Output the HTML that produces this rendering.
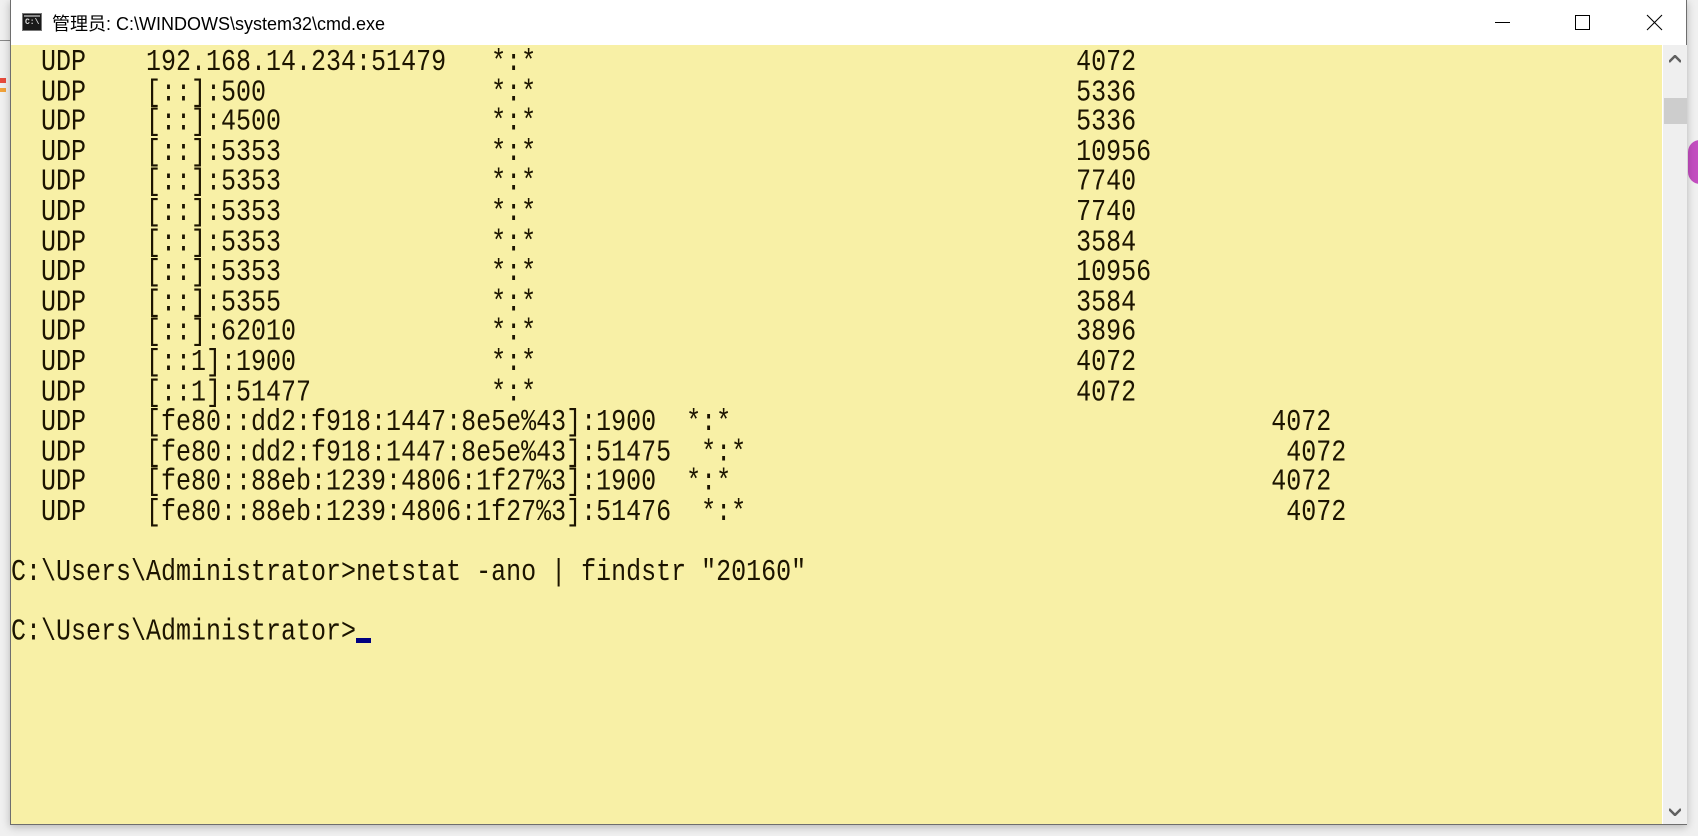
<!DOCTYPE html>
<html><head><meta charset="utf-8"><style>
html,body{margin:0;padding:0;}
body{width:1698px;height:836px;position:relative;overflow:hidden;background:#f0f0f0;}
#win{position:absolute;left:10px;top:0;width:1677px;height:825px;background:#fff;border-left:1px solid #6e6e6e;border-right:1px solid #6e6e6e;border-bottom:1px solid #6e6e6e;box-sizing:border-box;box-shadow:0 2px 8px rgba(0,0,0,.25);}
#title{position:absolute;left:41px;top:10px;font:18px "Liberation Sans","Noto Sans CJK SC",sans-serif;color:#000;white-space:nowrap;}
#icon{position:absolute;left:11px;top:13px;width:20px;height:18px;background:#1a1a1a;border:1px solid #777;box-sizing:border-box;}
#icon:before{content:"";position:absolute;left:1px;right:1px;top:1px;height:2px;background:#888;}
#icon span{position:absolute;left:2px;top:4px;font:bold 8px "Liberation Mono",monospace;color:#ddd;}
#term{position:absolute;left:0;top:45px;width:1651px;height:779px;background:#f8f0a6;}
#sb{position:absolute;left:1651px;top:45px;width:24px;height:779px;background:#efefef;border-left:1px solid #fff;}
#thumb{position:absolute;left:1px;top:53px;width:23px;height:26px;background:#cdcdcd;}
pre{position:absolute;left:0;top:3px;margin:0;font:25px/24.6px "Liberation Mono",monospace;color:#1c1400;transform:scaleY(1.22);transform-origin:0 0;}
#cur{position:absolute;left:345px;top:638px;width:15px;height:5px;background:#000080;}
</style></head><body>
<div style="position:absolute;left:0;top:78px;width:6px;height:5px;background:#e84b3c"></div>
<div style="position:absolute;left:0;top:88px;width:6px;height:4px;background:#f2a33a"></div>
<div style="position:absolute;left:0;top:40px;width:10px;height:1px;background:#888"></div>
<div style="position:absolute;left:1688px;top:140px;width:24px;height:44px;border-radius:22px;background:#c34ec0"></div>
<div id="win">
<div id="icon"><span>C:\</span></div>
<div id="title">管理员: C:\WINDOWS\system32\cmd.exe</div>
<svg style="position:absolute;left:1484px;top:14px" width="180" height="18">
<line x1="0" y1="8.5" x2="15" y2="8.5" stroke="#000" stroke-width="1"/>
<rect x="80.5" y="1.5" width="14" height="14" fill="none" stroke="#000" stroke-width="1"/>
<line x1="152" y1="1" x2="167" y2="16" stroke="#000" stroke-width="1.1"/>
<line x1="167" y1="1" x2="152" y2="16" stroke="#000" stroke-width="1.1"/>
</svg>
<div id="term">
<pre>  UDP    192.168.14.234:51479   *:*                                    4072
  UDP    [::]:500               *:*                                    5336
  UDP    [::]:4500              *:*                                    5336
  UDP    [::]:5353              *:*                                    10956
  UDP    [::]:5353              *:*                                    7740
  UDP    [::]:5353              *:*                                    7740
  UDP    [::]:5353              *:*                                    3584
  UDP    [::]:5353              *:*                                    10956
  UDP    [::]:5355              *:*                                    3584
  UDP    [::]:62010             *:*                                    3896
  UDP    [::1]:1900             *:*                                    4072
  UDP    [::1]:51477            *:*                                    4072
  UDP    [fe80::dd2:f918:1447:8e5e%43]:1900  *:*                                    4072
  UDP    [fe80::dd2:f918:1447:8e5e%43]:51475  *:*                                    4072
  UDP    [fe80::88eb:1239:4806:1f27%3]:1900  *:*                                    4072
  UDP    [fe80::88eb:1239:4806:1f27%3]:51476  *:*                                    4072

C:\Users\Administrator&gt;netstat -ano | findstr "20160"

C:\Users\Administrator&gt;</pre>
</div>
<div id="cur"></div>
<div id="sb"><div id="thumb"></div>
<svg style="position:absolute;left:6px;top:10px" width="12" height="8"><path d="M0 7 L6 1 L12 7" fill="none" stroke="#606060" stroke-width="2.5"/></svg>
<svg style="position:absolute;left:6px;top:763px" width="12" height="8"><path d="M0 1 L6 7 L12 1" fill="none" stroke="#606060" stroke-width="2.5"/></svg>
</div>
</div>
</body></html>
